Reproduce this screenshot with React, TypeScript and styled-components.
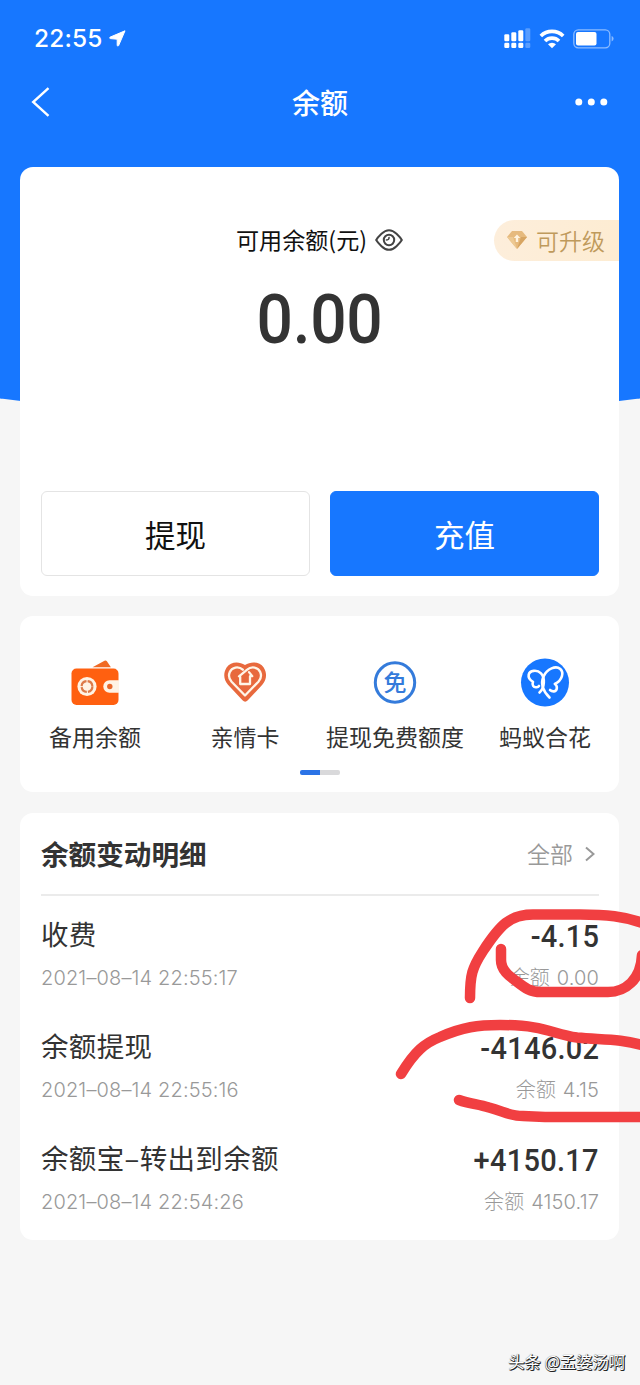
import React from "react";
import styled, { createGlobalStyle } from "styled-components";

const cjk = `"Noto Sans CJK SC", sans-serif`;

const GlobalStyle = createGlobalStyle`
  * { box-sizing: border-box; }
  body { margin: 0; background: #f6f6f6; font-family: ${cjk}; color: #333; }
`;

const Page = styled.main`
  position: relative;
  display: flex;
  flex-direction: column;
  height: 1385px;
  overflow: hidden;
  background: #f6f6f6;
`;

const Backdrop = styled.div`
  position: absolute;
  inset: 0 -180px auto;
  height: 417px;
  background: #1777ff;
  border-radius: 0 0 50% 50% / 0 0 80px 80px;
`;

const StatusBar = styled.header`
  position: relative;
  display: flex;
  align-items: center;
  justify-content: space-between;
  height: 77px;
  padding: 0 26px 0 34px;
  color: #fff;
`;

const Clock = styled.div`
  display: flex;
  align-items: center;
  gap: 6px;
  padding-bottom: 1px;
  font: 500 24.4px/30px Inter, sans-serif;
  letter-spacing: 0.2px;
`;

const StatusIcons = styled.div`
  display: flex;
  align-items: center;
  gap: 8px;
`;

const NavBar = styled.nav`
  position: relative;
  display: grid;
  grid-template-columns: 60px 1fr 60px;
  align-items: center;
  height: 50px;
  margin-bottom: 40px;
  padding: 0 30px;
  color: #fff;
`;

const NavTitle = styled.h1`
  margin: 0;
  text-align: center;
  font: 500 28px/40px ${cjk};
`;

const NavMore = styled.div`
  display: flex;
  justify-content: flex-end;
`;

const Cards = styled.div`
  position: relative;
  display: flex;
  flex-direction: column;
  padding: 0 21px 0 20px;
`;

const Card = styled.section<{ $height: number; $gap?: number }>`
  display: flex;
  flex-direction: column;
  height: ${(p) => p.$height}px;
  margin-bottom: ${(p) => p.$gap ?? 0}px;
  background: #fff;
  border-radius: 13px;
`;

const BalanceTop = styled.div`
  display: grid;
  grid-template-columns: 1fr auto 1fr;
  align-items: center;
  height: 42px;
  margin-top: 52px;
`;

const BalanceLabel = styled.div`
  grid-column: 2;
  display: flex;
  align-items: center;
  gap: 8px;
  color: #111;
  font-size: 23.1px;
  line-height: 34px;
`;

const LabelText = styled.span`
  padding-bottom: 2px;
`;

const UpgradeTag = styled.div`
  justify-self: end;
  display: flex;
  align-items: center;
  gap: 8px;
  width: 125px;
  height: 41px;
  padding: 0 0 1px 12px;
  border-radius: 21px 0 0 21px;
  background: linear-gradient(90deg, #fdeedb, #fdecd2);
  color: #bf9a5c;
  font-size: 23px;
  font-weight: 350;
`;

const Balance = styled.div`
  margin-top: 17px;
  text-align: center;
  color: #333;
  font: 500 69px/84px Roboto, sans-serif;
  letter-spacing: -0.4px;
  transform: scaleX(0.93);
`;

const Actions = styled.div`
  display: flex;
  gap: 20px;
  margin: auto 20px 20px 21px;
`;

const Action = styled.button<{ $primary?: boolean }>`
  flex: 1;
  height: 85px;
  padding: 0;
  border: 1.5px solid ${(p) => (p.$primary ? "#1777ff" : "#e4e4e4")};
  border-radius: 6px;
  background: ${(p) => (p.$primary ? "#1777ff" : "#fff")};
  color: ${(p) => (p.$primary ? "#fff" : "#111")};
  font: 400 30.5px/44px ${cjk};
`;

const Services = styled.div`
  display: grid;
  grid-template-columns: repeat(4, 150px);
  height: 154px;
  padding-top: 42px;
`;

const Service = styled.div`
  display: flex;
  flex-direction: column;
  align-items: center;
  gap: 11px;
  font-size: 23px;
  line-height: 34px;
  white-space: nowrap;
`;

const Pager = styled.div`
  width: 40px;
  height: 5px;
  margin: 0 auto;
  border-radius: 2px;
  background: linear-gradient(90deg, #2b73e6 50%, #d9d9db 50%);
`;

const ListHead = styled.div`
  display: flex;
  align-items: center;
  justify-content: space-between;
  height: 83px;
  margin: 0 20px 0 21px;
  border-bottom: 2px solid #ebebeb;
`;

const ListTitle = styled.h2`
  margin: 0;
  padding-bottom: 2px;
  font: 700 27.6px/40px ${cjk};
`;

const AllLink = styled.div`
  display: flex;
  align-items: center;
  gap: 12px;
  padding: 0 4px 2px 0;
  color: #999;
  font-size: 23px;
  font-weight: 350;
`;

const Entry = styled.div`
  display: grid;
  grid-template-columns: 1fr auto;
  grid-template-rows: 44px 36px;
  align-items: center;
  height: 112px;
  padding: 18px 20px 0 21px;
`;

const EntryName = styled.div`
  padding-bottom: 7px;
  font-size: 27.5px;
  letter-spacing: 0.35px;
`;

const EntryAmount = styled.div`
  text-align: right;
  font: 500 30.5px/44px Roboto, sans-serif;
  letter-spacing: 0.3px;
  padding-top: 2px;
  transform: scaleX(0.95);
  transform-origin: right;
`;

const EntryMeta = styled.div<{ $right?: boolean }>`
  text-align: ${(p) => (p.$right ? "right" : "left")};
  color: #999;
  font: 300 20px/30px Inter, ${cjk};
  letter-spacing: 0.15px;
  word-spacing: ${(p) => (p.$right ? 1 : 0)}px;
  padding-top: 3px;
`;

const Scribble = styled.svg`
  position: absolute;
  left: 380px;
  top: 890px;
`;

const Credit = styled.div`
  position: absolute;
  right: 15px;
  bottom: 12px;
  color: #fff;
  font-size: 16.3px;
  line-height: 24px;
  text-shadow: 1px 1px 0 #222, 1px 0 0 #444, 0 1px 0 #444, 0 0 1px #555;
`;

const LocationIcon = () => (
  <svg width="17" height="17" viewBox="0 0 17 17">
    <path d="M16 .8 9.600 15.600c-.3.700-1.400.600-1.400-.3V9.200L1.400 8.600c-.9-.1-1-1.100-.2-1.500z" fill="#fff" stroke="#fff" strokeWidth="1" strokeLinejoin="round" />
  </svg>
);

const SignalIcon = () => (
  <svg width="27" height="22" viewBox="0 0 27 22" fill="#fff">
    {[6, 4, 2, 0].map((top, i) => (
      <g key={top} opacity={i === 3 ? 0.28 : 1}>
        <rect x={i * 7 + 0.3} y={top + 0.3} width="5" height={12.9 - top} rx="1.3" />
        <rect x={i * 7 + 0.3} y="14.700" width="5" height="5.300" rx="1.3" />
      </g>
    ))}
  </svg>
);

const WifiIcon = () => (
  <svg width="26" height="20" viewBox="0 0 26 20" fill="none" stroke="#fff" strokeWidth="3.7">
    <path d="M1.8 7a16 16 0 0 1 22.4 0" />
    <path d="M6 12a10 10 0 0 1 14 0" />
    <path d="M13 19.2 9 15.3a5.8 5.8 0 0 1 8 0z" fill="#fff" stroke="none" />
  </svg>
);

const BatteryIcon = () => (
  <svg width="41" height="20" viewBox="0 0 41 20">
    <rect x=".8" y=".8" width="36" height="18" rx="4.5" fill="none" stroke="#fff" strokeOpacity=".5" strokeWidth="1.3" />
    <rect x="3" y="3" width="20.5" height="13.6" rx="2" fill="#fff" />
    <path d="M38.6 7v5.5q2-1 2-2.8T38.6 7" fill="#fff" opacity=".5" />
  </svg>
);

const BackIcon = () => (
  <svg width="20" height="30" viewBox="0 0 20 30">
    <path d="M18.5 1.2 3.2 15l15.3 13.8" fill="none" stroke="#fff" strokeWidth="2.4" />
  </svg>
);

const MoreIcon = () => (
  <svg width="35" height="8" viewBox="0 0 35 8" fill="#fff">
    <circle cx="3.8" cy="4" r="3.5" />
    <circle cx="16.3" cy="4" r="3.5" />
    <circle cx="28.8" cy="4" r="3.5" />
  </svg>
);

const EyeIcon = () => (
  <svg width="28" height="24" viewBox="0 0 28 24" fill="none" stroke="#444" strokeWidth="2">
    <path d="M1.200 12Q2.500 9.600 6.500 5.800q7.500-7.200 15 0 4 3.800 5.300 6.200-1.300 2.400-5.300 6.200-7.500 7.200-15 0Q2.500 14.400 1.200 12z" />
    <circle cx="14" cy="12" r="5.200" />
    <path d="M14 8.800q.6 3.200-3.200 3.200" strokeWidth="1.500" />
  </svg>
);

const DiamondIcon = () => (
  <svg width="22" height="20" viewBox="0 0 22 20">
    <path d="M6 1h10l5 6-10 12L1 7z" fill="#e6ba7e" />
    <path d="M1 7h6l4 12z" fill="#edc993" />
    <path d="M21 7h-6l-4 12z" fill="#d7a563" />
    <path d="m11 4.500 3.300 3.500h-2.100V12H9.800V8H7.700z" fill="#fff3df" />
  </svg>
);

const WalletIcon = () => (
  <svg width="50" height="50" viewBox="0 0 50 50">
    <path d="m22.500 9.300 12-6.600q1.500-.8 2.400.6l4 6z" fill="#f06a24" />
    <rect x="1.500" y="10.500" width="47" height="36.500" rx="5" fill="#ff6010" />
    <circle cx="17" cy="28.500" r="9.600" fill="#fff3e4" />
    <circle cx="17" cy="28.500" r="5.400" fill="none" stroke="#dd7a48" strokeWidth="2.200" strokeDasharray="7.300 1.180" />
    <path d="M49 22.300H39.500a6.200 6.200 0 0 0 0 12.400H49z" fill="#fff3e4" />
    <circle cx="39.800" cy="28.500" r="2.700" fill="#e8672a" />
  </svg>
);

const HeartIcon = () => (
  <svg width="50" height="50" viewBox="0 0 50 50">
    <path d="M25 7C19 3 10.500 3.600 6.600 9.400 3 15 3.600 22 8 26.700L22.500 42.300q2.700 2.700 5.300 0L42.300 26.700C46.700 22 47.300 15 43.700 9.400 39.800 3.600 31 3 25 7z" fill="#e8693d" />
    <g fill="none" stroke="#fff5e8" strokeWidth="2.300" strokeLinejoin="round" strokeLinecap="round">
      <path d="M22.800 11.700C18.500 7.800 11.800 9.200 9.800 14c-1.500 3.600-.7 7 1.800 9.700L25 37.500l13.400-13.800c2.500-2.700 3.300-6.100 1.800-9.700-2-4.800-8.700-6.200-13-2.300L19 18.300" />
      <path d="M29 14.100 32.300 18.200H30V26H20.200v-7.200" />
    </g>
  </svg>
);

const FreeIcon = () => (
  <svg width="50" height="50" viewBox="0 0 50 50">
    <circle cx="25" cy="24.500" r="19.700" fill="none" stroke="#347bdb" strokeWidth="3" />
    <text x="25" y="32.800" textAnchor="middle" fontFamily='"Noto Sans CJK SC", sans-serif' fontWeight="500" fontSize="23" fill="#347bdb">免</text>
  </svg>
);

const ButterflyIcon = () => (
  <svg width="50" height="50" viewBox="0 0 50 50">
    <circle cx="25" cy="24.500" r="24" fill="#1777ff" />
    <g fill="none" stroke="#fff" strokeWidth="2.600" strokeLinecap="round" strokeLinejoin="round">
      <path d="M19.500 34.500C25 29.500 25 19.500 21 15.300c-4-4-11.500-3-12.300 1.500-.6 3 1 5.200 4.300 7-1.200 3.200.3 6 3.700 5.400q1.500-.2 2.300-1.200" />
      <path d="M29.500 39.500C22.500 32.500 20.500 25.500 23.500 18.500 27 10.500 36 7.300 40.300 11c3.800 3.500 2.200 11-5.500 15 3 1.800 2.700 6.800-.8 7.400q-2.200.2-4-1.400" />
    </g>
  </svg>
);

const ChevronIcon = () => (
  <svg width="10" height="18" viewBox="0 0 10 18">
    <path d="m1 3.500 7.500 6.500L1 16.500" fill="none" stroke="#999" strokeWidth="2" />
  </svg>
);

const services = [
  { name: "备用余额", Icon: WalletIcon },
  { name: "亲情卡", Icon: HeartIcon },
  { name: "提现免费额度", Icon: FreeIcon },
  { name: "蚂蚁合花", Icon: ButterflyIcon },
];

const entries = [
  { name: "收费", time: "2021–08–14 22:55:17", amount: "-4.15", left: "0.00" },
  { name: "余额提现", time: "2021–08–14 22:55:16", amount: "-4146.02", left: "4.15" },
  { name: "余额宝–转出到余额", time: "2021–08–14 22:54:26", amount: "+4150.17", left: "4150.17" },
];

export default function App() {
  return (
    <Page>
      <GlobalStyle />
      <Backdrop />
      <StatusBar>
        <Clock>22:55 <LocationIcon /></Clock>
        <StatusIcons><SignalIcon /><WifiIcon /><BatteryIcon /></StatusIcons>
      </StatusBar>
      <NavBar>
        <BackIcon />
        <NavTitle>余额</NavTitle>
        <NavMore><MoreIcon /></NavMore>
      </NavBar>
      <Cards>
        <Card $height={429} $gap={20}>
          <BalanceTop>
            <BalanceLabel><LabelText>可用余额(元)</LabelText><EyeIcon /></BalanceLabel>
            <UpgradeTag><DiamondIcon />可升级</UpgradeTag>
          </BalanceTop>
          <Balance>0.00</Balance>
          <Actions>
            <Action>提现</Action>
            <Action $primary>充值</Action>
          </Actions>
        </Card>
        <Card $height={176} $gap={21}>
          <Services>
            {services.map(({ name, Icon }) => (
              <Service key={name}><Icon />{name}</Service>
            ))}
          </Services>
          <Pager />
        </Card>
        <Card $height={427}>
          <ListHead>
            <ListTitle>余额变动明细</ListTitle>
            <AllLink>全部<ChevronIcon /></AllLink>
          </ListHead>
          {entries.map((e) => (
            <Entry key={e.time}>
              <EntryName>{e.name}</EntryName>
              <EntryAmount>{e.amount}</EntryAmount>
              <EntryMeta>{e.time}</EntryMeta>
              <EntryMeta $right>余额 {e.left}</EntryMeta>
            </Entry>
          ))}
        </Card>
      </Cards>
      <Scribble width="260" height="240" viewBox="380 890 260 240" fill="none" stroke="#f13f41" strokeWidth="10.500" strokeLinecap="round" strokeLinejoin="round">
        <path d="M470 998C470 975 472 968 483 951C500 925 510 914.500 533 914.500H580C605 914.500 625 916 645 924" />
        <path d="M501 949V960C501 970 509 976 516 981C525 988 530 992 541 992H608C625 992 641 980 642 955" />
        <path d="M401 1074C415 1051 425 1043 440 1037C463 1027 478 1025 500 1025C545 1025 552 1034 577 1037.500C600 1040 620 1038 645 1046" />
        <path d="M459 1100C470 1104 478 1104 489 1107.500C505 1112 510 1116 523 1116L545 1117H645" />
      </Scribble>
      <Credit>头条 @孟婆汤啊</Credit>
    </Page>
  );
}
